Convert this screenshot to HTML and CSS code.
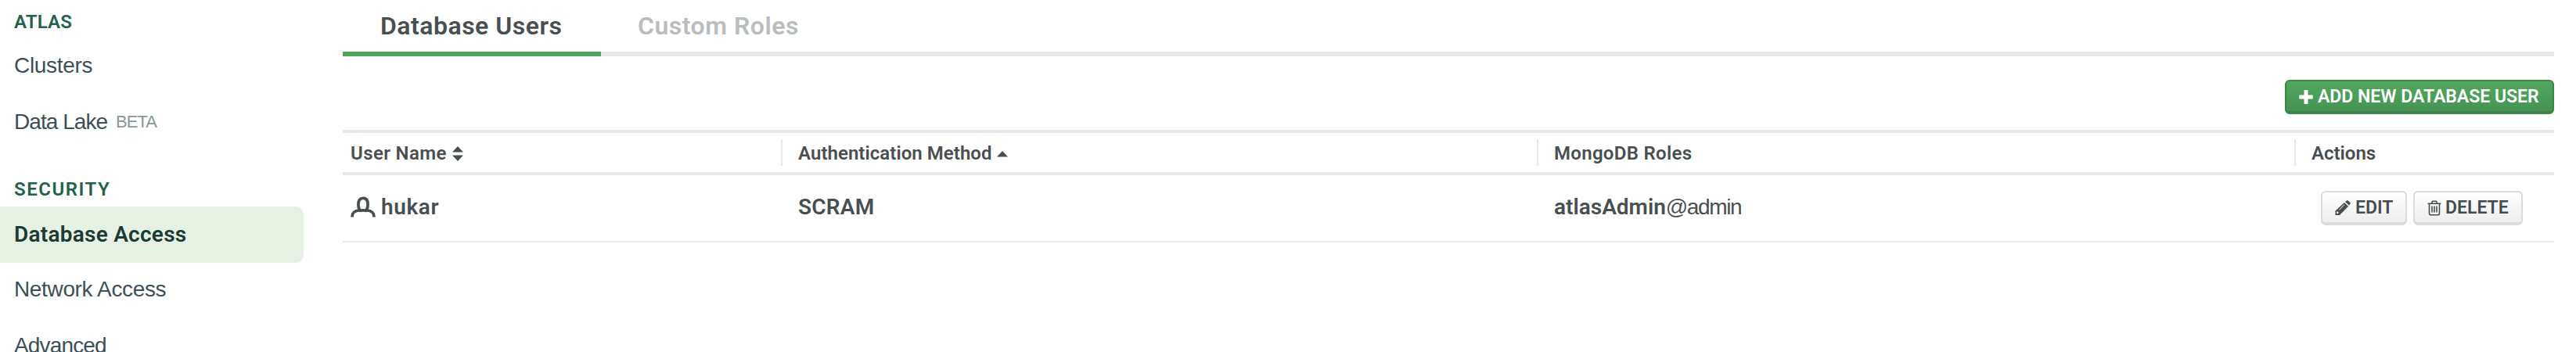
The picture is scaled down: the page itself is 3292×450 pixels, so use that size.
FILE: index.html
```html
<!DOCTYPE html>
<html lang="en">
<head>
<meta charset="utf-8">
<title>Database Access</title>
<link rel="stylesheet" href="styles.css">
</head>
<body>
<div class="app">
  <nav class="sidebar">
    <h2 class="nav-heading">ATLAS</h2>
    <a class="nav-item clusters">Clusters</a>
    <a class="nav-item lake">Data Lake<span class="beta">BETA</span></a>
    <h2 class="nav-heading security">SECURITY</h2>
    <a class="nav-item active">Database Access</a>
    <a class="nav-item network">Network Access</a>
    <a class="nav-item advanced">Advanced</a>
  </nav>
  <main class="main">
    <div class="tabs">
      <a class="tab current">Database Users</a>
      <a class="tab">Custom Roles</a>
    </div>
    <div class="toolbar">
      <button class="btn primary"><svg class="plus" width="18" height="18" viewBox="0 0 18 18"><path d="M7.500 0h3q1 0 1 1v5.500h5.300q1 0 1 1v3q0 1-1 1h-5.300v5.500q0 1-1 1h-3q-1 0-1-1v-5.500h-5.300q-1 0-1-1v-3q0-1 1-1h5.300v-5.500q0-1 1-1z"/></svg><span>ADD NEW DATABASE USER</span></button>
    </div>
    <div class="grid head">
      <div class="th"><span class="user-label">User Name</span><svg class="sort" width="14" height="19" viewBox="0 0 14 19"><path d="M7 0l7 7.600H0zM0 11.400h14L7 19z"/></svg></div>
      <div class="th"><span class="auth-label">Authentication Method</span><svg class="caret" width="14" height="8" viewBox="0 0 14 8"><path d="M7 0l7 7.500H0z"/></svg></div>
      <div class="th"><span class="roles-label">MongoDB Roles</span></div>
      <div class="th">Actions</div>
    </div>
    <div class="grid row">
      <div class="td"><svg class="person" width="32" height="27" viewBox="0 0 32 27"><path d="M1.900 26.500C1.900 20.500 5 18.400 11.800 17.600C10.300 15.500 9.900 13 9.900 10C9.900 5 12 2.400 16 2.400S22.100 5 22.100 10C22.100 13 21.700 15.500 20.200 17.600C27 18.400 30.100 20.500 30.100 26.500"/><path d="M11 18.300Q16 17.300 21 18.300"/></svg><b class="name">hukar</b></div>
      <div class="td"><b class="scram">SCRAM</b></div>
      <div class="td"><b class="role">atlasAdmin</b><span class="scope">@admin</span></div>
      <div class="td actions">
        <button class="btn edit"><svg width="20" height="20" viewBox="0 0 20 20"><path fill-rule="evenodd" d="M13 2l2-1.600q.8-.7 1.600 0L19.400 3q.8.800.1 1.600L18 6.500zM12 3l5 4.700L6 19H.5v-5.500zM3 14l-1 1.300v1.700h1.500L5 16zM11.500 5.500L5 12l.6.600L12.200 6z"/></svg><span>EDIT</span></button>
        <button class="btn delete"><svg width="18" height="20" viewBox="0 0 18 20"><g class="line"><path d="M.5 4.300h17M5.500 4l1-2.800h5l1 2.800M2.500 4.300v12.200q0 2.300 2 2.300h9q2 0 2-2.300V4.300M6 7.500v8M9 7.500v8M12 7.500v8"/></g></svg><span>DELETE</span></button>
      </div>
    </div>
  </main>
</div>
</body>
</html>
```
FILE: styles.css
```css
* { box-sizing: border-box; }
body { margin: 0; background: #fff; color: #494f51; font-family: Roboto, "Liberation Sans", sans-serif; }
.app { display: flex; height: 450px; overflow: hidden; }

.sidebar { flex: none; width: 438px; padding-top: 12px; }
.nav-heading { margin: 0 0 4px; padding-left: 18px; font-size: 24px; font-weight: 600; line-height: 32px; letter-spacing: .2px; color: #23614c; }
.nav-heading.security { margin: 34px 0 6px; letter-spacing: 1.500px; }
.nav-item { display: flex; align-items: center; width: 388px; height: 72px; padding-left: 18px; font: 28px/32px "Liberation Sans", sans-serif; color: #3d4f58; }
.clusters { letter-spacing: -.3px; }
.lake { letter-spacing: -.95px; }
.network { margin-top: -2px; letter-spacing: -.35px; }
.advanced { letter-spacing: -.85px; }
.beta { margin-left: 11px; font-size: 22px; letter-spacing: -1px; color: #89979b; }
.nav-item.active { border-radius: 0 10px 10px 0; background: #e6f1e4; color: #1a3c34; font-family: Roboto, sans-serif; font-weight: 600; letter-spacing: .25px; }

.main { flex: none; width: 2826px; }
.tabs { display: flex; height: 72px; box-shadow: inset 0 -6px #e7e9e8; }
.tab { padding: 0 47px; font-size: 32px; font-weight: 600; line-height: 66px; letter-spacing: .5px; color: #babdbe; }
.tab.current { width: 330px; padding: 0 0 0 48px; border-bottom: 6px solid #4ea65b; color: #494f51; }
.toolbar { display: flex; justify-content: flex-end; padding: 30px 0 20px; }

.btn { display: flex; align-items: center; height: 44px; border: 2px solid #d8dcdc; border-bottom-width: 4px; border-radius: 6px; padding: 2px 0 0 16px; background: linear-gradient(#fff, #eee); color: #464c4f; font: 600 23px/28px Roboto, sans-serif; white-space: nowrap; }
.btn svg { flex: none; fill: currentColor; }
.primary { width: 344px; border-color: #3d834a; background: linear-gradient(#50a85d, #479353); color: #fff; }
.primary span { margin-left: 6px; }

.grid { display: grid; grid-template-columns: 560px 966px 968px 332px; }
.head { height: 58px; border: solid #e7e9e8; border-width: 4px 0; align-items: center; }
.th { display: flex; align-items: center; height: 34px; padding: 2px 0 0 20px; border-left: 2px solid #e7e9e8; font-size: 24px; font-weight: 600; line-height: 32px; }
.th:first-child { padding-left: 10px; border-left: 0; }
.th svg { fill: #494f51; }
.sort { margin-left: 7px; }
.caret { margin: 1px 0 0 6px; }
.user-label { letter-spacing: .4px; }
.auth-label { letter-spacing: .05px; }
.roles-label { letter-spacing: .3px; }
.row { height: 86px; border-bottom: 2px solid #e7e9e8; }
.td { display: flex; align-items: center; padding: 0 0 3px 22px; font-size: 28px; line-height: 32px; }
.td:first-child { padding-left: 10px; }
.td b { font-weight: 600; }
.person { fill: none; stroke: #494f51; stroke-width: 3.800; }
.name { margin-left: 7px; letter-spacing: .6px; }
.scram { letter-spacing: .2px; }
.scope { font-family: "Liberation Sans", sans-serif; letter-spacing: -1.400px; }
.actions { gap: 8px; padding: 0 0 0 34px; }
.edit { width: 110px; }
.edit span { margin-left: 6px; }
.delete { width: 140px; }
.delete span { margin-left: 5px; }
.line { fill: none; stroke: #494f51; stroke-width: 1.600; }
```
